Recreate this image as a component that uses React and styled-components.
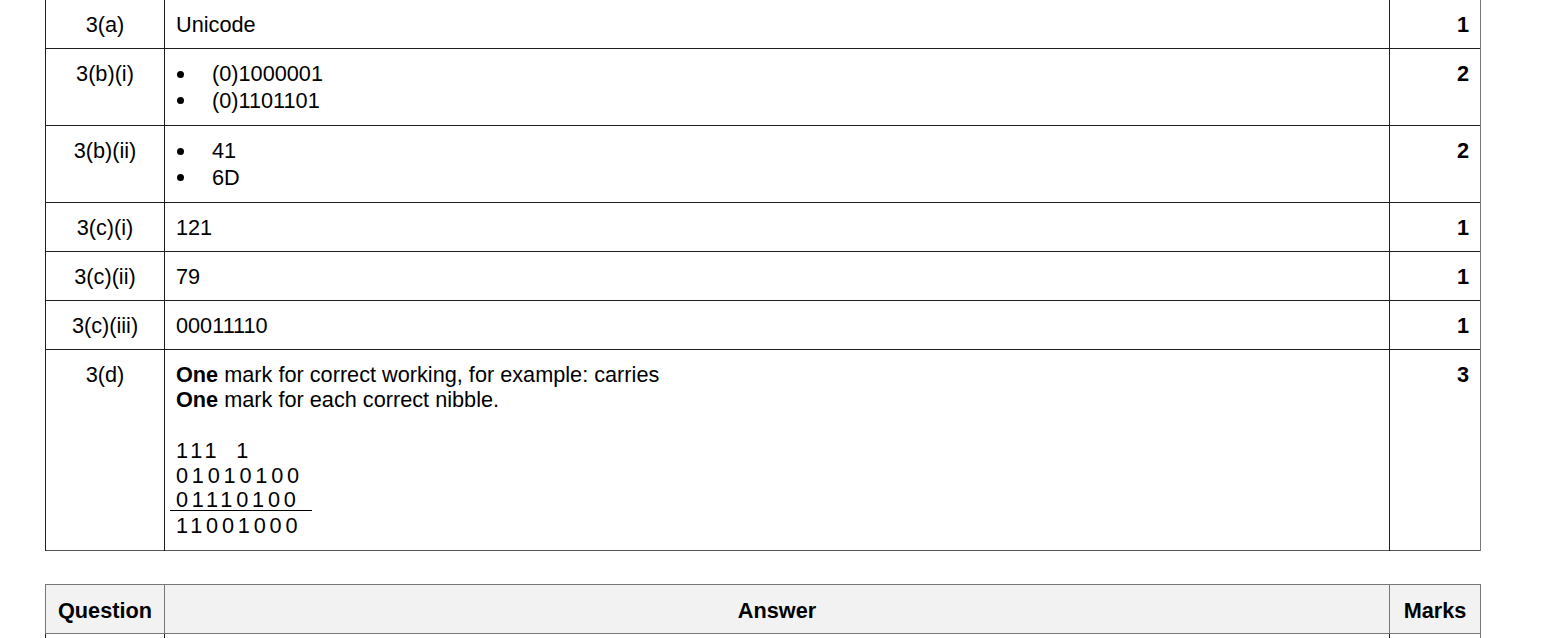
import React from 'react';
import styled, { createGlobalStyle } from 'styled-components';

const GlobalStyle = createGlobalStyle`
  html, body {
    margin: 0;
    padding: 0;
    background: #fff;
  }
  body {
    font-family: 'Liberation Sans', Arial, Helvetica, sans-serif;
    color: #000;
  }
`;

const Page = styled.div`
  width: 1568px;
  height: 638px;
  overflow: hidden;
  padding-left: 45px;
  box-sizing: border-box;
`;

const Table = styled.table`
  width: 1435px;
  border-collapse: collapse;
  table-layout: fixed;
  font-size: 21.7px;
  line-height: 25px;
  margin-top: ${p => p.$top || 0}px;
  border-left: 1px solid #6a6a6a;
  border-right: 1px solid #555;
  border-bottom: 1px solid #555;
`;

const Row = styled.tr`
  border-top: 1px solid #1e1e1e;
`;

const Cell = styled.td`
  vertical-align: top;
  padding: 12px 11px 11px 11px;
  text-align: ${p => p.$align || 'left'};
  font-weight: ${p => (p.$bold ? 700 : 400)};
  line-height: ${p => p.$lh || 25}px;
  border-left: 1px solid ${p => p.$line || '#1e1e1e'};
  border-right: 1px solid ${p => p.$line || '#1e1e1e'};
`;

const HeadRow = styled.tr`
  background: #f2f2f2;
  border-top: 1px solid #777;
  border-bottom: 1px solid #777;
`;

const HeadCell = styled.th`
  font-weight: 700;
  text-align: center;
  padding: 13px 11px 10px 11px;
  border-left: 1px solid #777;
  border-right: 1px solid #777;
`;

const Bullets = styled.ul`
  list-style: none;
  margin: 0;
  padding: 0;
`;

const Item = styled.li`
  display: grid;
  grid-template-columns: 36px 1fr;
  align-items: center;
  line-height: 26.5px;
  &::before {
    content: '';
    width: 7px;
    height: 7px;
    border-radius: 50%;
    background: #000;
    margin-left: 1px;
  }
`;

const Gap = styled.div`
  height: 25.3px;
`;

const Binary = styled.div`
  letter-spacing: 3.8px;
`;

const Sum = styled(Binary)`
  width: fit-content;
  line-height: 21px;
  padding: 1px 12px 0 6px;
  margin: 0 0 2px -6px;
  border-bottom: 1.5px solid #000;
`;

const rows = [
  { q: '3(a)', a: 'Unicode', m: 1 },
  { q: '3(b)(i)', list: ['(0)1000001', '(0)1101101'], m: 2 },
  { q: '3(b)(ii)', list: ['41', '6D'], m: 2 },
  { q: '3(c)(i)', a: '121', m: 1 },
  { q: '3(c)(ii)', a: '79', m: 1 },
  { q: '3(c)(iii)', a: '00011110', m: 1 },
];

const Cols = () => (
  <colgroup>
    <col style={{ width: 119 }} />
    <col style={{ width: 1225 }} />
    <col style={{ width: 91 }} />
  </colgroup>
);

export default function App() {
  return (
    <Page>
      <GlobalStyle />
      <Table $top={-1}>
        <Cols />
        <tbody>
          {rows.map(r => (
            <Row key={r.q}>
              <Cell $align="center">{r.q}</Cell>
              <Cell>
                {r.list ? (
                  <Bullets>
                    {r.list.map(t => (
                      <Item key={t}>{t}</Item>
                    ))}
                  </Bullets>
                ) : (
                  r.a
                )}
              </Cell>
              <Cell $align="right" $bold $line="#777">{r.m}</Cell>
            </Row>
          ))}
          <Row>
            <Cell $align="center">3(d)</Cell>
            <Cell $lh={25.3}>
              <div><b>One</b> mark for correct working, for example: carries</div>
              <div><b>One</b> mark for each correct nibble.</div>
              <Gap />
              <Binary>111{'\u2007'}1</Binary>
              <Binary>01010100</Binary>
              <Sum>01110100</Sum>
              <Binary>11001000</Binary>
            </Cell>
            <Cell $align="right" $bold $line="#777">3</Cell>
          </Row>
        </tbody>
      </Table>
      <Table $top={33}>
        <Cols />
        <thead>
          <HeadRow>
            <HeadCell>Question</HeadCell>
            <HeadCell>Answer</HeadCell>
            <HeadCell>Marks</HeadCell>
          </HeadRow>
        </thead>
        <tbody>
          <Row>
            <Cell $align="center">&nbsp;</Cell>
            <Cell>&nbsp;</Cell>
            <Cell $line="#777">&nbsp;</Cell>
          </Row>
        </tbody>
      </Table>
    </Page>
  );
}
